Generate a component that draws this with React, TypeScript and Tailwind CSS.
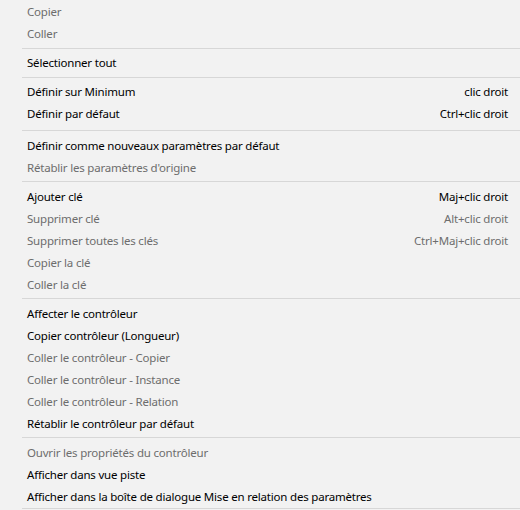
import React from 'react';

type Item =
  | { label: string; shortcut?: string; disabled?: boolean }
  | { sep: number; top: number };

const items: Item[] = [
  { label: 'Copier', disabled: true },
  { label: 'Coller', disabled: true },
  { sep: 7, top: 4 },
  { label: 'Sélectionner tout' },
  { sep: 7, top: 4 },
  { label: 'Définir sur Minimum', shortcut: 'clic droit' },
  { label: 'Définir par défaut', shortcut: 'Ctrl+clic droit' },
  { sep: 10, top: 6 },
  { label: 'Définir comme nouveaux paramètres par défaut' },
  { label: "Rétablir les paramètres d'origine", disabled: true },
  { sep: 7, top: 3 },
  { label: 'Ajouter clé', shortcut: 'Maj+clic droit' },
  { label: 'Supprimer clé', shortcut: 'Alt+clic droit', disabled: true },
  { label: 'Supprimer toutes les clés', shortcut: 'Ctrl+Maj+clic droit', disabled: true },
  { label: 'Copier la clé', disabled: true },
  { label: 'Coller la clé', disabled: true },
  { sep: 7, top: 3 },
  { label: 'Affecter le contrôleur' },
  { label: 'Copier contrôleur (Longueur)' },
  { label: 'Coller le contrôleur - Copier', disabled: true },
  { label: 'Coller le contrôleur - Instance', disabled: true },
  { label: 'Coller le contrôleur - Relation', disabled: true },
  { label: 'Rétablir le contrôleur par défaut' },
  { sep: 7, top: 3 },
  { label: 'Ouvrir les propriétés du contrôleur', disabled: true },
  { label: 'Afficher dans vue piste' },
  { label: 'Afficher dans la boîte de dialogue Mise en relation des paramètres' },
  { sep: 3, top: 1 },
];

export default function App() {
  return (
    <div
      className="w-[520px] h-[510px] overflow-hidden bg-[#f2f2f2] text-[11.5px] leading-none tracking-[-0.2px]"
      style={{ fontFamily: '"Noto Sans", "Open Sans", sans-serif' }}
    >
      {items.map((item, i) =>
        'sep' in item ? (
          <div key={i} className="pl-[22px]" style={{ height: item.sep, paddingTop: item.top }}>
            <div className="h-px bg-[#d7d7d7]" />
          </div>
        ) : (
          <div
            key={i}
            className={`h-[22px] pt-[1px] flex items-center justify-between pl-[27px] pr-[12px] ${
              item.disabled ? 'text-[#6d6d6d]' : 'text-black'
            }`}
          >
            <span>{item.label}</span>
            {item.shortcut && <span>{item.shortcut}</span>}
          </div>
        )
      )}
    </div>
  );
}
